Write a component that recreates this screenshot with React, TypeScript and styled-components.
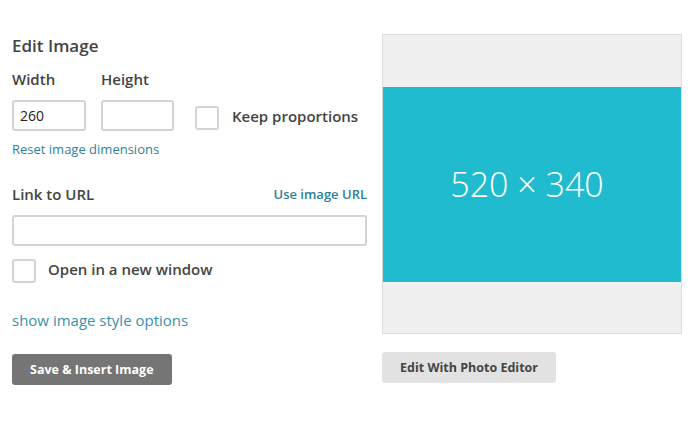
import React from "react";
import styled, { createGlobalStyle } from "styled-components";

const Global = createGlobalStyle`
  html, body { margin: 0; padding: 0; background: #fff; }
  body { font-family: "Open Sans", "Noto Sans", sans-serif; color: #444; }
  * { box-sizing: border-box; }
`;

const Page = styled.div`
  display: flex;
  gap: 15px;
  padding: 34px 0 0 12px;
  width: 699px;
  height: 444px;
`;

const Form = styled.div`
  width: 355px;
  display: flex;
  flex-direction: column;
`;

const Title = styled.h2`
  margin: 1px 0 0;
  font-size: 17px;
  font-weight: 600;
  line-height: 22px;
  color: #444;
`;

const Label = styled.div`
  font-size: 15px;
  font-weight: 600;
  line-height: 20px;
  color: #444;
`;

const DimRow = styled.div`
  display: flex;
  align-items: flex-end;
  margin-top: 12px;
`;

const Field = styled.div<{ $w: number }>`
  width: ${(p) => p.$w}px;
  display: flex;
  flex-direction: column;
  gap: 11px;
`;

const Input = styled.input<{ $w?: string }>`
  width: ${(p) => p.$w || "100%"};
  height: 31px;
  border: 2px solid #d4d4d4;
  border-radius: 3px;
  padding: 0 6px;
  font-family: "Open Sans", sans-serif;
  font-size: 14px;
  color: #222;
  outline: none;
`;

const CheckLabel = styled.label<{ $gap: number }>`
  display: flex;
  align-items: center;
  gap: ${(p) => p.$gap}px;
  font-size: 15px;
  font-weight: 600;
  line-height: 20px;
  color: #444;
`;

const Box = styled.span`
  width: 24px;
  height: 24px;
  border: 2px solid #d4d4d4;
  border-radius: 3px;
  flex-shrink: 0;
  margin-bottom: -4px;
`;

const SmallLink = styled.a<{ $bold?: boolean }>`
  font-size: 13px;
  font-weight: ${(p) => (p.$bold ? 600 : 400)};
  color: #307f99;
  text-decoration: none;
  line-height: 18px;
`;

const RowBetween = styled.div`
  display: flex;
  justify-content: space-between;
  align-items: center;
  margin-top: 26px;
  width: 355px;
`;

const StyleLink = styled.a`
  margin-top: 31px;
  font-size: 15px;
  color: #3a91ab;
  line-height: 20px;
`;

const Button = styled.button<{ $primary?: boolean }>`
  height: 31px;
  padding: 0 18px;
  border: none;
  border-radius: 3px;
  font-family: "Open Sans", sans-serif;
  font-size: 12.5px;
  font-weight: 700;
  background: ${(p) => (p.$primary ? "#757575" : "#e2e2e2")};
  color: ${(p) => (p.$primary ? "#fff" : "#444")};
  align-self: flex-start;
`;

const Right = styled.div`
  display: flex;
  flex-direction: column;
  gap: 18px;
`;

const Preview = styled.div`
  width: 300px;
  height: 300px;
  border: 1px solid #dcdcdc;
  background: #f0f0f0;
  display: flex;
  align-items: center;
`;

const Placeholder = styled.div`
  width: 100%;
  height: 195px;
  padding-right: 10px;
  background: #21bbd0;
  color: #fff;
  display: flex;
  align-items: center;
  justify-content: center;
  font-size: 34px;
  font-weight: 300;
`;

export default function App() {
  return (
    <>
      <Global />
      <Page>
        <Form>
          <Title>Edit Image</Title>
          <DimRow>
            <Field $w={89}>
              <Label>Width</Label>
              <Input $w="74px" defaultValue="260" />
            </Field>
            <Field $w={94}>
              <Label>Height</Label>
              <Input $w="73px" />
            </Field>
            <CheckLabel $gap={13} style={{ marginBottom: 5 }}>
              <Box />
              Keep proportions
            </CheckLabel>
          </DimRow>
          <SmallLink style={{ marginTop: 9 }}>Reset image dimensions</SmallLink>
          <RowBetween>
            <Label>Link to URL</Label>
            <SmallLink $bold>Use image URL</SmallLink>
          </RowBetween>
          <Input style={{ marginTop: 11 }} />
          <CheckLabel $gap={12} style={{ marginTop: 13 }}>
            <Box />
            Open in a new window
          </CheckLabel>
          <StyleLink>show image style options</StyleLink>
          <Button $primary style={{ marginTop: 24 }}>Save &amp; Insert Image</Button>
        </Form>
        <Right>
          <Preview>
            <Placeholder>520 × 340</Placeholder>
          </Preview>
          <Button>Edit With Photo Editor</Button>
        </Right>
      </Page>
    </>
  );
}
